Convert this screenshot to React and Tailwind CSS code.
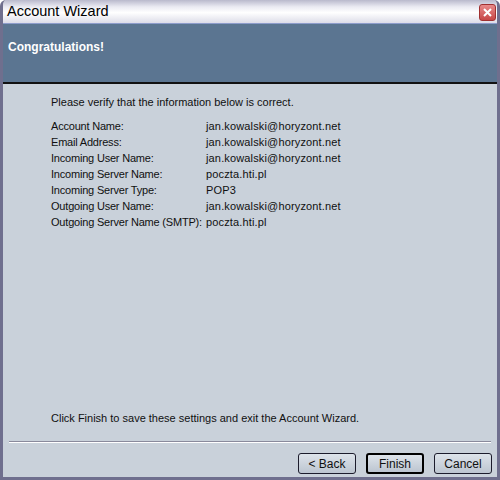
export default function App() {
  const rows = [
    ["Account Name:", "jan.kowalski@horyzont.net"],
    ["Email Address:", "jan.kowalski@horyzont.net"],
    ["Incoming User Name:", "jan.kowalski@horyzont.net"],
    ["Incoming Server Name:", "poczta.hti.pl"],
    ["Incoming Server Type:", "POP3"],
    ["Outgoing User Name:", "jan.kowalski@horyzont.net"],
    ["Outgoing Server Name (SMTP):", "poczta.hti.pl"],
  ];
  const font = { fontFamily: '"Liberation Sans", Arial, sans-serif' };
  return (
    <div className="w-[500px] h-[480px] flex flex-col bg-[#c9d1da] border-x-[3px] border-b-[3px] border-[#6f6f8e] rounded-t-[6px] overflow-hidden text-[#101010]" style={font}>
      <div className="h-[24px] flex items-center justify-between pl-[4px] pr-[1px] bg-[linear-gradient(#b9b9cc_0%,#ebebf3_30%,#ffffff_55%,#dcdce8_100%)] border-b border-[#8d9ccb]">
        <span className="text-[14.5px] leading-none text-black">Account Wizard</span>
        <div className="w-[17px] h-[17px] rounded-[3px] bg-[linear-gradient(#e88a8a,#c64646)] border border-[#a03030] flex items-center justify-center mt-[1px]">
          <svg width="9" height="9" viewBox="0 0 9 9">
            <path d="M1 1 L8 8 M8 1 L1 8" stroke="#ffffff" strokeWidth="2" />
          </svg>
        </div>
      </div>
      <div className="h-[60px] shrink-0 bg-[#5b7591] border-b-2 border-[#111] px-[5px] pt-[10px]">
        <span className="text-white font-bold text-[12px]">Congratulations!</span>
      </div>
      <div className="flex-1 flex flex-col pl-[48px] pt-[11px] text-[11px]">
        <div className="leading-[14px]">Please verify that the information below is correct.</div>
        <div className="mt-[9px] flex flex-col">
          {rows.map(([k, v]) => (
            <div key={k} className="flex h-[16px] items-center whitespace-nowrap">
              <span className="w-[155px] shrink-0 tracking-[-0.2px]">{k}</span>
              <span className="tracking-[0.15px]">{v}</span>
            </div>
          ))}
        </div>
        <div className="flex-1" />
        <div className="mb-[15px]">Click Finish to save these settings and exit the Account Wizard.</div>
      </div>
      <div className="mx-[6px] h-[2px] border-t border-[#8a8a9c] border-b border-b-white" />
      <div className="flex justify-end gap-[10px] pr-[5px] pt-[10px] pb-[3px] text-[12px]">
        <button className="w-[58px] h-[21px] rounded-[3px] border border-[#1c1c2c] bg-[linear-gradient(#dde3ea,#bcc5d0)]">&lt; Back</button>
        <button className="w-[58px] h-[21px] rounded-[3px] border-2 border-[#000] bg-[linear-gradient(#dde3ea,#bcc5d0)]">Finish</button>
        <button className="w-[58px] h-[21px] rounded-[3px] border border-[#1c1c2c] bg-[linear-gradient(#dde3ea,#bcc5d0)]">Cancel</button>
      </div>
    </div>
  );
}
